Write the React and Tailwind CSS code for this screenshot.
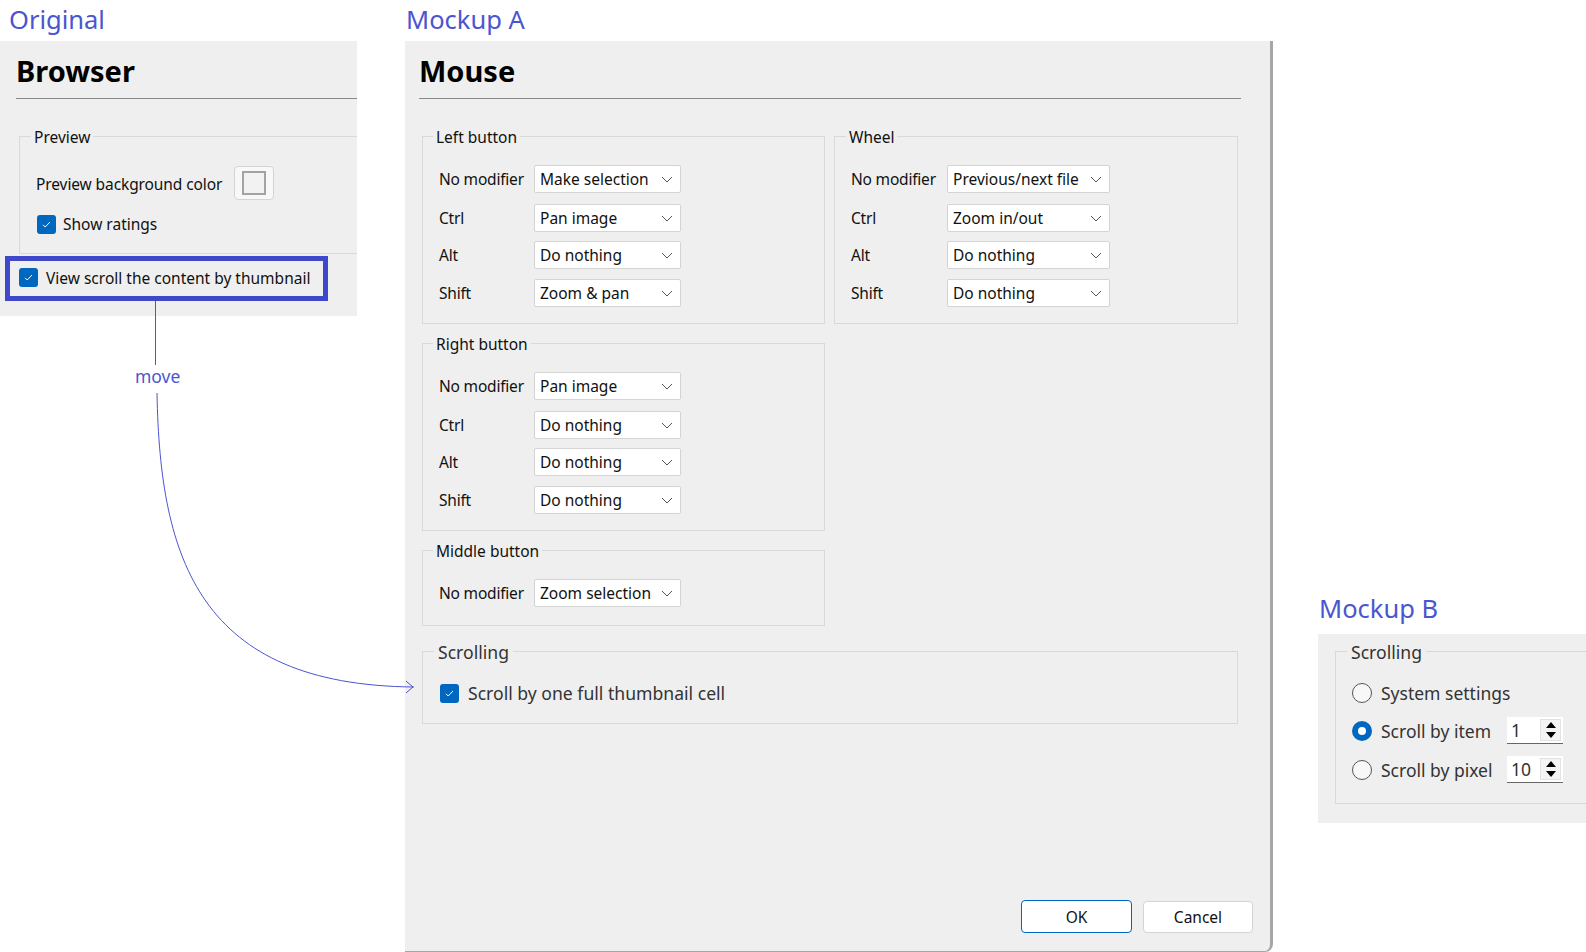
const LEFT_ROWS = [
  { label: "No modifier", value: "Make selection", tweak: "" },
  { label: "Ctrl", value: "Pan image", tweak: "mt-px" },
  { label: "Alt", value: "Do nothing", tweak: "-mt-px" },
  { label: "Shift", value: "Zoom & pan", tweak: "" },
];
const RIGHT_ROWS = [
  { label: "No modifier", value: "Pan image", tweak: "" },
  { label: "Ctrl", value: "Do nothing", tweak: "mt-px" },
  { label: "Alt", value: "Do nothing", tweak: "-mt-px" },
  { label: "Shift", value: "Do nothing", tweak: "" },
];
const WHEEL_ROWS = [
  { label: "No modifier", value: "Previous/next file", tweak: "" },
  { label: "Ctrl", value: "Zoom in/out", tweak: "mt-px" },
  { label: "Alt", value: "Do nothing", tweak: "-mt-px" },
  { label: "Shift", value: "Do nothing", tweak: "" },
];

const Chevron = () => (
  <svg width="12" height="7" viewBox="0 0 12 7" fill="none" className="shrink-0">
    <path d="M1 1l5 5 5-5" stroke="#555" strokeWidth="1" />
  </svg>
);

const Checkbox = () => (
  <span className="flex h-[19px] w-[19px] shrink-0 items-center justify-center rounded-[3px] bg-[#0067c0]">
    <svg width="9" height="7" viewBox="0 0 9 7" fill="none">
      <path d="M1 3.8l2.2 2.2L8 1" stroke="#fff" strokeWidth="1" />
    </svg>
  </span>
);

const Radio = ({ on }) =>
  on ? (
    <span className="flex h-[20px] w-[20px] shrink-0 items-center justify-center rounded-full bg-[#0067c0]">
      <span className="h-[8px] w-[8px] rounded-full bg-white" />
    </span>
  ) : (
    <span className="h-[20px] w-[20px] shrink-0 rounded-full border border-[#555] bg-[#f8f8f8]" />
  );

const Group = ({ title, className = "", big, legendMargin = "ml-[10px]", children }) => (
  <fieldset className={`border border-[#d9d9d9] ${className}`}>
    <legend
      className={
        big
          ? "ml-[11px] px-[4px] pt-[2px] text-[17.6px] leading-[24px] text-[#333]"
          : `${legendMargin} px-[3px] pt-[2px] text-[15.5px] leading-[20px]`
      }
    >
      {title}
    </legend>
    {children}
  </fieldset>
);

const Select = ({ value, width }) => (
  <div
    className={`flex h-[28px] items-center justify-between rounded-[2px] border border-[#d4d4d4] bg-white pl-[5px] pr-[7px] ${width}`}
  >
    <span className="whitespace-nowrap">{value}</span>
    <Chevron />
  </div>
);

const Rows = ({ rows, width }) => (
  <div className="flex flex-col gap-[10px] pb-[16px] pl-[16px] pt-[18px]">
    {rows.map((row) => (
      <div key={row.label} className={`flex items-center ${row.tweak}`}>
        <span className="w-[95px] whitespace-nowrap tracking-[-0.2px]">{row.label}</span>
        <Select value={row.value} width={width} />
      </div>
    ))}
  </div>
);

const Spin = ({ value }) => (
  <div className="flex h-[27px] w-[56px] items-center justify-between border-b border-[#666] bg-white pl-[4px] pr-[2px]">
    <span className="text-[17.5px]">{value}</span>
    <div className="flex h-[22px] w-[21px] flex-col items-center justify-around border border-[#e2e2e2] bg-[#f4f4f4]">
      <span className="h-0 w-0 border-x-[5px] border-b-[6px] border-x-transparent border-b-black" />
      <span className="h-0 w-0 border-x-[5px] border-t-[6px] border-x-transparent border-t-black" />
    </div>
  </div>
);

const Caption = ({ children, className }) => (
  <div className={`absolute text-[25.5px] leading-[34px] text-[#4a55d0] ${className}`}>{children}</div>
);

const Heading = ({ children }) => (
  <div className="border-b border-[#888] pb-[8px] pt-[11px]">
    <h1 className="text-[29px] font-bold leading-[38px] text-black">{children}</h1>
  </div>
);

export default function App() {
  return (
    <div className="relative h-[952px] w-[1586px] overflow-hidden bg-white text-[15.5px] leading-[20px] text-[#111] [font-family:'Noto_Sans','Open_Sans',sans-serif]">
      <Caption className="left-[9px] top-[2px]">Original</Caption>
      <Caption className="left-[406px] top-[2px]">Mockup A</Caption>
      <Caption className="left-[1319px] top-[591px]">Mockup B</Caption>

      {/* Original */}
      <div className="absolute left-0 top-[41px] h-[275px] w-[357px] overflow-hidden bg-[#efefef]">
        <div className="pl-[16px]">
          <Heading>Browser</Heading>
        </div>
        <Group title="Preview" legendMargin="ml-[11px]" className="ml-[19px] mt-[26px] h-[129px] w-[360px]">
          <div className="flex flex-col pl-[16px] pt-[19px]">
            <div className="flex items-center gap-[8px]">
              <span className="w-[190px] whitespace-nowrap pt-[2px] tracking-[-0.1px]">Preview background color</span>
              <div className="flex h-[34px] w-[40px] items-center justify-center rounded-[4px] border border-[#d4d4d4] bg-[#f8f8f8]">
                <span className="h-[24px] w-[24px] border-2 border-[#a3a3a3] bg-[#f2f2f2]" />
              </div>
            </div>
            <div className="mt-[14px] flex items-center gap-[7px] pl-px">
              <Checkbox />
              <span>Show ratings</span>
            </div>
          </div>
        </Group>
      </div>
      {/* highlight sits over the Original panel */}
      <div className="absolute left-[5px] top-[256px] flex h-[45px] w-[323px] items-center gap-[8px] border-[5px] border-[#3f48c8] pb-[2px] pl-[9px]">
        <Checkbox />
        <span className="whitespace-nowrap">View scroll the content by thumbnail</span>
      </div>

      {/* Mockup A */}
      <div className="absolute left-[405px] top-[41px] flex h-[911px] w-[868px] flex-col rounded-br-[8px] border-b border-r-[3px] border-[#a6a6a6] bg-[#efefef] pl-[14px] pr-[29px]">
        <Heading>Mouse</Heading>
        <div className="mt-[27px] grid w-[816px] grid-cols-[403px_404px] items-start gap-x-[9px] pl-[3px]">
          <div className="flex flex-col gap-[8px]">
            <Group title="Left button" className="-mt-px">
              <Rows rows={LEFT_ROWS} width="w-[147px]" />
            </Group>
            <Group title="Right button">
              <Rows rows={RIGHT_ROWS} width="w-[147px]" />
            </Group>
            <Group title="Middle button">
              <div className="flex items-center pb-[18px] pl-[16px] pt-[18px]">
                <span className="w-[95px] whitespace-nowrap tracking-[-0.2px]">No modifier</span>
                <Select value="Zoom selection" width="w-[147px]" />
              </div>
            </Group>
          </div>
          <Group title="Wheel" legendMargin="ml-[11px]" className="-mt-px">
            <Rows rows={WHEEL_ROWS} width="ml-px w-[163px]" />
          </Group>
          <Group title="Scrolling" big className="col-span-2 mt-[12px] h-[86px]">
            <div className="flex items-center gap-[9px] pl-[17px] pt-[19px] text-[17.6px] text-[#333]">
              <Checkbox />
              <span>Scroll by one full thumbnail cell</span>
            </div>
          </Group>
        </div>
        <div className="-mr-[12px] mb-[18px] mt-auto flex items-end justify-end gap-[11px]">
          <button className="h-[33px] w-[111px] rounded-[4px] border border-[#0067c0] bg-white">OK</button>
          <button className="h-[32px] w-[110px] rounded-[4px] border border-[#d4d4d4] bg-white">Cancel</button>
        </div>
      </div>

      {/* Mockup B */}
      <div className="absolute left-[1318px] top-[634px] h-[189px] w-[268px] overflow-hidden bg-[#efefef] pl-[17px] pt-[4px]">
        <Group title="Scrolling" big className="h-[166px] w-[270px]">
          <div className="flex flex-col gap-[11px] pl-[16px] pt-[15px] text-[17.5px] text-[#333]">
            <div className="flex h-[27px] items-center gap-[9px]">
              <Radio />
              <span>System settings</span>
            </div>
            <div className="flex h-[27px] items-center gap-[9px]">
              <Radio on />
              <span className="w-[117px]">Scroll by item</span>
              <Spin value="1" />
            </div>
            <div className="mt-px flex h-[27px] items-center gap-[9px]">
              <Radio />
              <span className="w-[117px] whitespace-nowrap">Scroll by pixel</span>
              <Spin value="10" />
            </div>
          </div>
        </Group>
      </div>

      {/* move connector */}
      <svg className="absolute left-0 top-0" width="430" height="700" fill="none" stroke="#4a55d0" strokeWidth="1">
        <path d="M155.5 301V365" />
        <path d="M157 393C160 560 200 685 414 687" />
        <path d="M406 681l7 6-7 6" />
      </svg>
      <div className="absolute left-[135px] top-[364px] text-[17.5px] leading-[24px] text-[#4a55d0]">move</div>
    </div>
  );
}
